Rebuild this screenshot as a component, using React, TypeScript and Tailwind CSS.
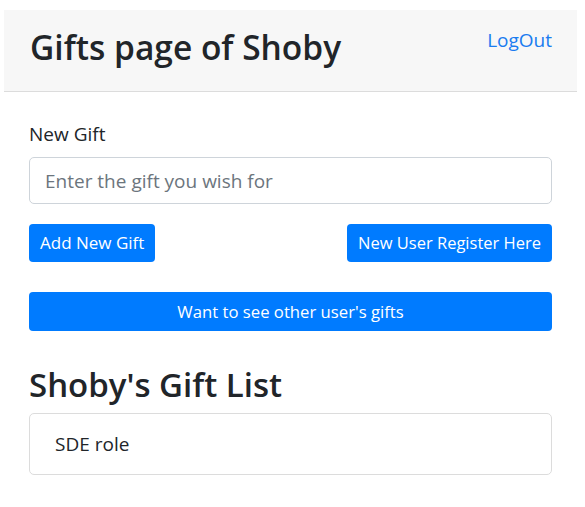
import React, { useState } from 'react';

const gifts = ['SDE role'];

export default function App() {
  const [gift, setGift] = useState('');

  return (
    <div className="min-h-screen bg-white pt-[10px] pl-[4px] pr-[8px] text-[#212529] font-['Open_Sans',sans-serif]">
      <header className="h-[82px] bg-[#f7f7f7] border-b border-[#dcdcdc] flex justify-between items-start pl-[26px] pr-[25px] pt-[18px]">
        <h1 className="text-[33.5px] leading-[38px] font-semibold">Gifts page of Shoby</h1>
        <a href="#" className="text-[19px] leading-[26px] text-[#1a7cf0] mt-[-1px]">LogOut</a>
      </header>

      <main className="px-[25px] pt-[28px]">
        <label className="block text-[19px] leading-[28px] mb-[9px]">New Gift</label>
        <input
          value={gift}
          onChange={(e) => setGift(e.target.value)}
          placeholder="Enter the gift you wish for"
          className="block w-full h-[47px] px-[15px] text-[19px] border border-[#ced4da] rounded-[5px] placeholder:text-[#6c757d] outline-none"
        />

        <div className="flex justify-between mt-[20px]">
          <button className="h-[38px] px-[11px] bg-[#007bff] text-white text-[17px] rounded-[4px]">Add New Gift</button>
          <button className="h-[38px] px-[11px] bg-[#007bff] text-white text-[16.5px] rounded-[4px]">New User Register Here</button>
        </div>

        <button className="mt-[30px] w-full h-[39px] bg-[#007bff] text-white text-[16.7px] rounded-[4px]">
          Want to see other user's gifts
        </button>

        <h2 className="mt-[32px] text-[33px] leading-[44px] font-semibold">Shoby's Gift List</h2>

        <ul className="mt-[6px] border border-[#dcdcdc] rounded-[5px]">
          {gifts.map((g) => (
            <li key={g} className="h-[60px] flex items-center pl-[25px] text-[19px]">{g}</li>
          ))}
        </ul>
      </main>
    </div>
  );
}
